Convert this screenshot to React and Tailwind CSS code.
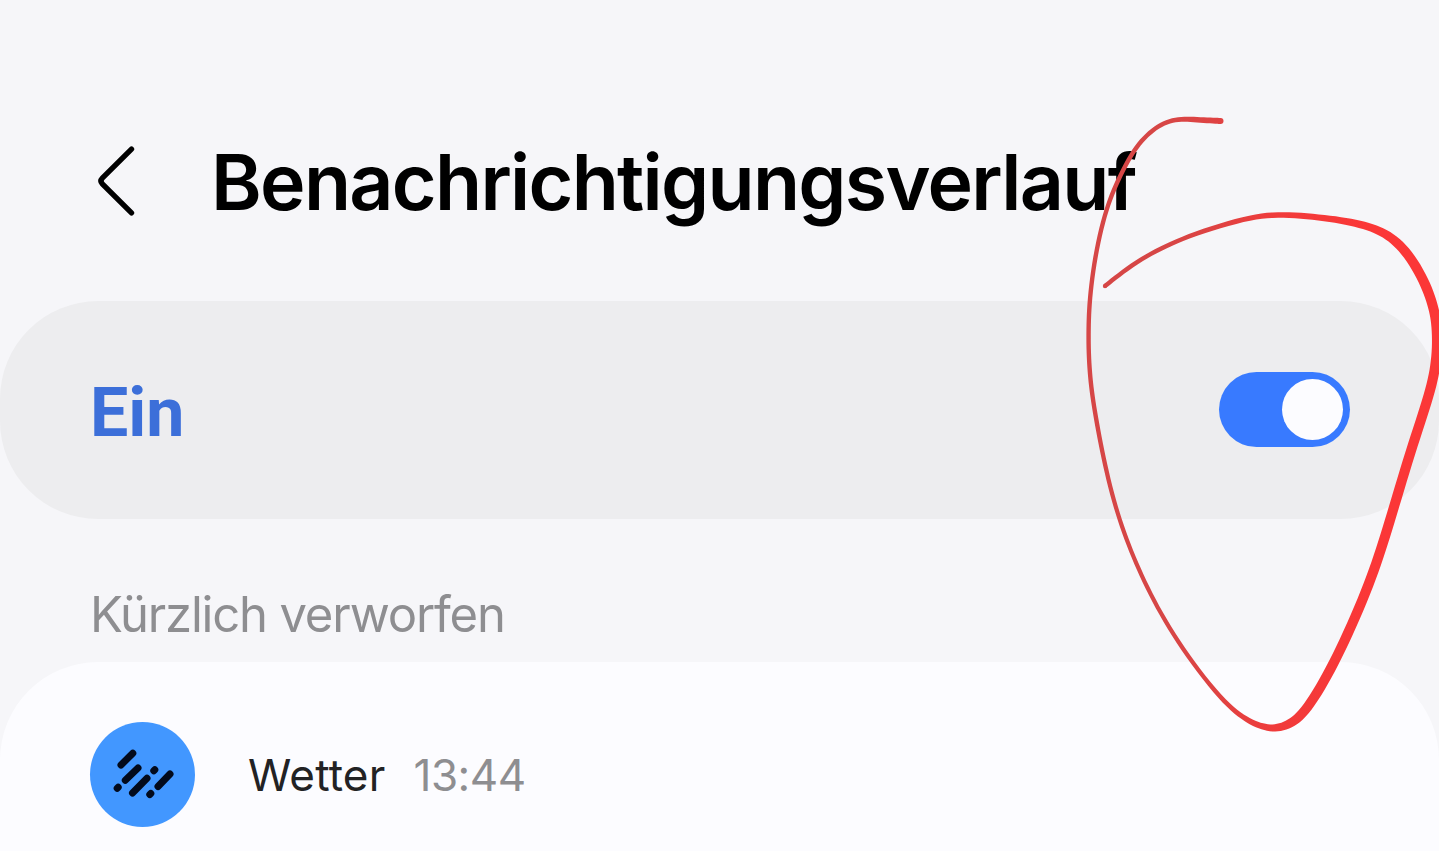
// [x, y, pen width] along the hand-drawn loop
const inkPoints = [
  [1221, 121, 6], [1200, 120, 5.6], [1181, 118.5, 4.8], [1164, 122, 4.4],
  [1146.5, 134.5, 4.4], [1131.5, 153, 4.4], [1115, 186, 4.4], [1104.5, 214, 4.4],
  [1094.8, 257, 4.4], [1089.4, 300, 4.4], [1088.4, 330, 4.4], [1088.7, 358, 4.4],
  [1091, 387, 4.4], [1095.5, 416, 4.4], [1103.3, 458, 4.4], [1113.5, 501, 4.2],
  [1126, 539, 4.2], [1141, 575, 4.2], [1160, 613, 4.2], [1187, 656, 4.2],
  [1222, 700.5, 4.4], [1243, 718, 5], [1260, 726.5, 6], [1275, 729, 7.2],
  [1290, 724.5, 8.8], [1304, 713.5, 9.6], [1323.5, 683, 10], [1344, 643, 10],
  [1367, 590, 10], [1381, 550, 10], [1394, 507, 10], [1410, 453, 10],
  [1426, 405, 10], [1434.5, 375, 10], [1437.5, 347, 10], [1436.5, 322, 10],
  [1433, 305, 10], [1424.5, 281, 10], [1408, 253, 9.8], [1391, 236.5, 9],
  [1373, 227.5, 7.8], [1347, 221, 6.8], [1313, 216.5, 6], [1277, 214, 5.6],
  [1247, 217.5, 5], [1193, 234, 4.6], [1160, 248.5, 4.4], [1132, 264.5, 4.4],
  [1105, 286, 4.4],
];

const bspline = (a, b, c, d, t) =>
  ((1 - t) ** 3 * a + (3 * t ** 3 - 6 * t ** 2 + 4) * b + (-3 * t ** 3 + 3 * t ** 2 + 3 * t + 1) * c + t ** 3 * d) / 6;

function smooth(points, steps) {
  const first = points[0];
  const last = points[points.length - 1];
  const all = [first, first, ...points, last, last];
  const out = [];
  for (let i = 0; i < all.length - 3; i++) {
    for (let s = 0; s < steps; s++) {
      out.push([0, 1, 2].map((k) => bspline(all[i][k], all[i + 1][k], all[i + 2][k], all[i + 3][k], s / steps)));
    }
  }
  return out;
}

// closed outline around the centre line, half a pen width to each side
function outline(pts) {
  const left = [];
  const right = [];
  pts.forEach(([x, y, w], i) => {
    const a = pts[Math.max(i - 1, 0)];
    const b = pts[Math.min(i + 1, pts.length - 1)];
    const len = Math.hypot(b[0] - a[0], b[1] - a[1]) || 1;
    const nx = (-(b[1] - a[1]) / len) * (w / 2);
    const ny = ((b[0] - a[0]) / len) * (w / 2);
    left.push(`${(x + nx).toFixed(2)},${(y + ny).toFixed(2)}`);
    right.unshift(`${(x - nx).toFixed(2)},${(y - ny).toFixed(2)}`);
  });
  return "M" + [...left, ...right].join("L") + "Z";
}

const inkPath = outline(smooth(inkPoints, 6));

function Ink() {
  return (
    <svg className="absolute inset-0 pointer-events-none" width="1439" height="851" viewBox="0 0 1439 851">
      <defs>
        <linearGradient id="ink" gradientUnits="userSpaceOnUse" x1="1160" y1="0" x2="1370" y2="0">
          <stop offset="0" stopColor="#d64646" />
          <stop offset="0.25" stopColor="#de4343" />
          <stop offset="0.55" stopColor="#f03b3b" />
          <stop offset="1" stopColor="#fb3737" />
        </linearGradient>
      </defs>
      <path d={inkPath} fill="url(#ink)" />
      <circle cx="1220.5" cy="121" r="3" fill="#e04242" />
      <circle cx="1105" cy="286" r="2.2" fill="#d64646" />
    </svg>
  );
}

function Header() {
  return (
    <header className="flex items-center h-[301px] pt-[61px] pl-[94px]">
      <button className="w-[44px] h-[76px] shrink-0" aria-label="Zurück">
        <svg width="44" height="76" viewBox="0 0 44 76" fill="none" stroke="#000" strokeWidth="5.4" strokeLinecap="round" strokeLinejoin="round">
          <path d="M37.5 6.2 L8.3 35.2 Q5.6 38 8.3 40.8 L37.5 69.8" />
        </svg>
      </button>
      <h1 className="ml-[73px] pt-[2px] text-[77px] leading-[96px] tracking-[-1.7px] font-semibold text-black whitespace-nowrap">
        Benachrichtigungsverlauf
      </h1>
    </header>
  );
}

function Toggle() {
  return (
    <button role="switch" aria-checked="true" className="flex items-center justify-end w-[131px] h-[75px] mb-[1px] pr-[7px] rounded-full bg-[#387aff]">
      <span className="size-[61px] rounded-full bg-[#fcfcff]" />
    </button>
  );
}

function WeatherIcon() {
  return (
    <div className="size-[105px] rounded-full bg-[#4297ff] shrink-0">
      <svg width="105" height="105" viewBox="0 0 105 105" stroke="#020a1c" strokeWidth="7" strokeLinecap="round">
        <path d="M42.8 31.2 L31 43" />
        <path d="M48 46 L35.3 58.3" />
        <path d="M57 56.3 L42.5 71" />
        <path d="M80 52 L68 64.5" />
        <path d="M28.2 65.2 L27.2 66.2" />
        <path d="M64.8 47.8 L63.8 48.8" />
        <path d="M60.8 71.5 L59.8 72.5" />
      </svg>
    </div>
  );
}

function App() {
  return (
    <div className="relative w-[1439px] h-[851px] overflow-hidden bg-[#f6f6f9] font-['Inter',sans-serif]">
      <Header />
      <section className="flex items-center justify-between h-[218px] pl-[90px] pr-[89px] rounded-[98px] bg-[#ededef]">
        <span className="pt-[5px] text-[68px] leading-[80px] font-bold text-[#3c6fd9] font-['Roboto',sans-serif]">Ein</span>
        <Toggle />
      </section>
      <h2 className="h-[143px] pt-[66px] pl-[90px] text-[49px] leading-[60px] tracking-[-1.2px] text-[#8e8e91]">
        Kürzlich verworfen
      </h2>
      <section className="h-[300px] pt-[60px] pl-[90px] rounded-t-[98px] bg-[#fcfcff]">
        <div className="flex items-center">
          <WeatherIcon />
          <span className="ml-[53px] text-[44px] leading-[60px] tracking-[0.2px] text-[#222224]">Wetter</span>
          <span className="ml-[28px] text-[44px] leading-[60px] tracking-[-0.5px] text-[#8e8e91]">13:44</span>
        </div>
      </section>
      <Ink />
    </div>
  );
}

export default App;
